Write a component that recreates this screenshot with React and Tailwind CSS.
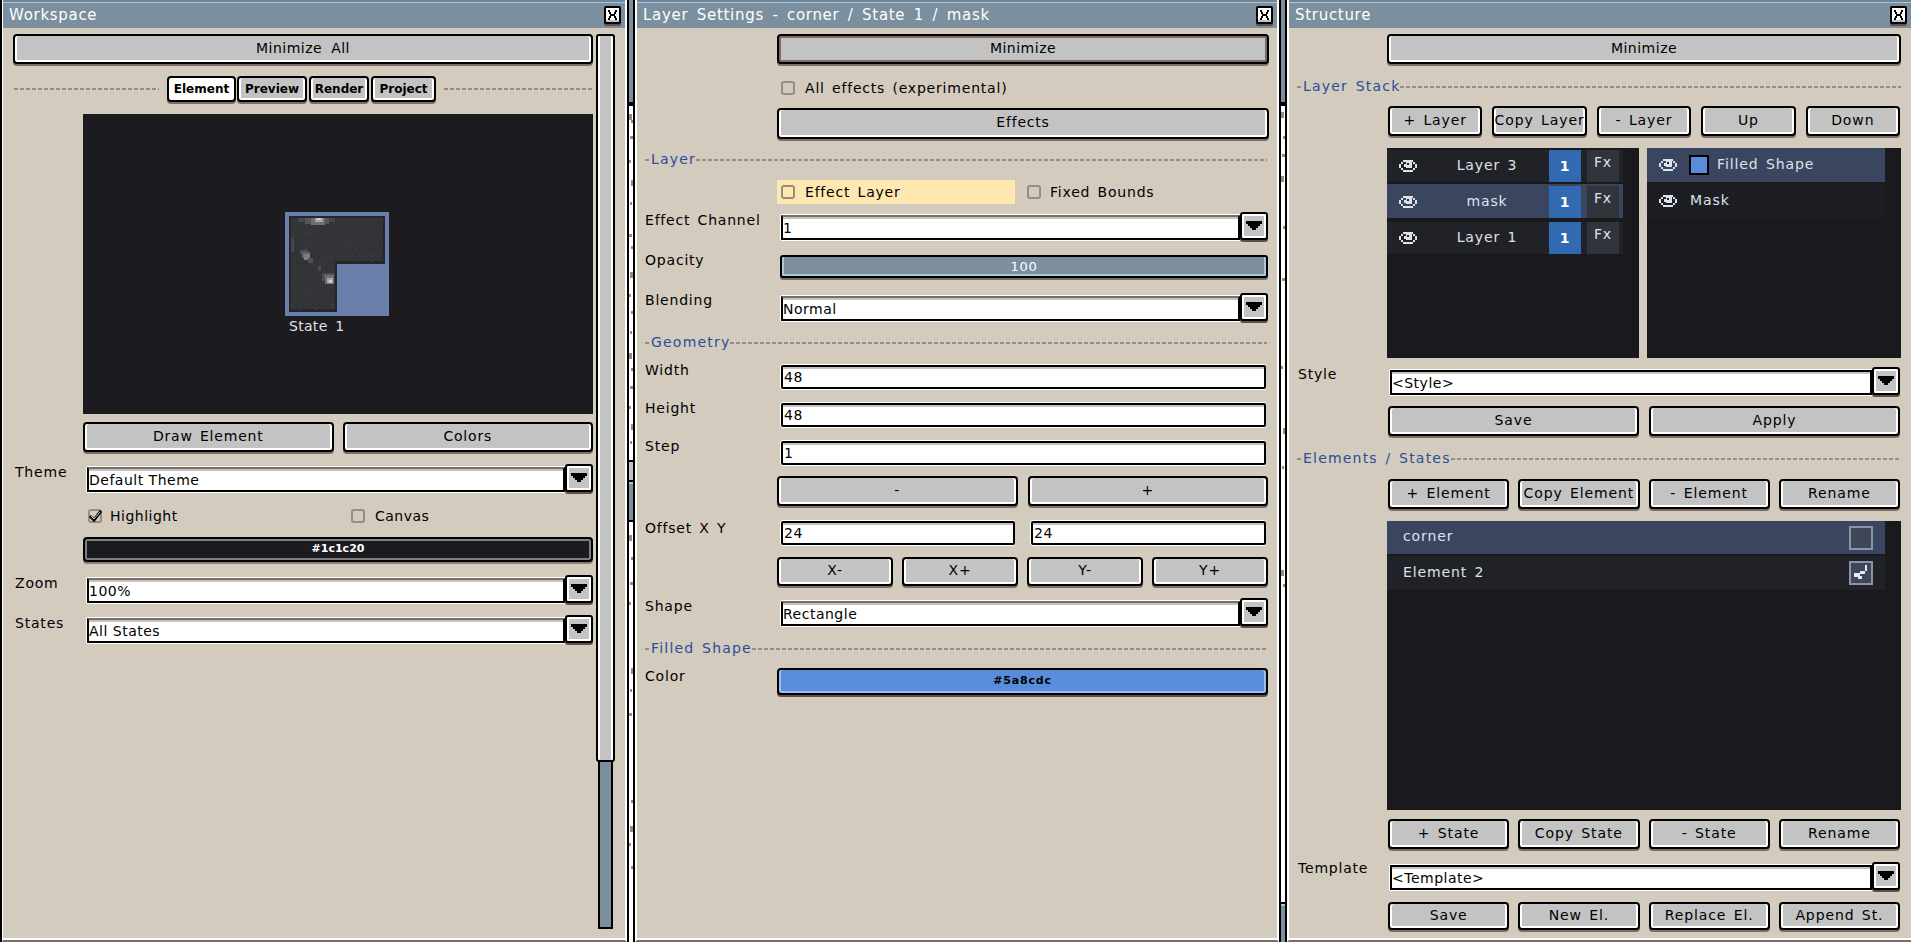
function Btn({ children, className = "", pressed = false }) {
  return (
    <div
      className={`flex items-center justify-center overflow-hidden whitespace-nowrap rounded-[4px] border-2 border-black bg-[#c3c3c3] pb-[2px] text-black ${
        pressed
          ? "shadow-[inset_0_0_0_2px_#7d6b65,0_2px_0_#7d6b65]"
          : "shadow-[inset_2px_0_0_#fff,inset_-2px_0_0_#fff,inset_0_-2px_0_#fff,0_2px_0_#7d6b65]"
      } ${className}`}
    >
      {children}
    </div>
  );
}

function Arrow() {
  return (
    <div className="relative z-10 flex h-[28px] w-[28px] shrink-0 items-center justify-center rounded-[3px] border-2 border-black bg-[#c3c3c3] shadow-[inset_2px_0_0_#fff,inset_-2px_0_0_#fff,inset_0_2px_0_#fff,inset_0_-2px_0_#fff,0_2px_0_#5d4f4a]">
      <svg width="18" height="10" viewBox="0 0 18 10" shapeRendering="crispEdges">
        <path d="M1 0h16v3h-2v2h-2v2h-2v2h-4v-2h-2v-2h-2v-2h-2z" fill="#000" />
      </svg>
    </div>
  );
}

function Select({ value, className = "", black = false }) {
  return (
    <div className={`flex items-start ${className}`}>
      <div
        className={`mt-[3px] flex h-[25px] flex-1 items-end overflow-hidden border-2 border-x-black border-b-black bg-white pb-[1px] text-[14px] leading-[18px] tracking-[0.5px] text-black shadow-[inset_0_2px_0_#c3c3c3,0_1px_0_#fff,-1px_0_0_#fff,0_-1px_0_#fff] ${
          black ? "border-t-black" : "border-t-[#7d6b65]"
        }`}
      >
        {value}
      </div>
      <Arrow />
    </div>
  );
}

function Input({ value, className = "" }) {
  return (
    <div className={`flex h-[24px] items-center rounded-[2px] border-2 border-black bg-white pl-[1px] text-[14px] leading-[18px] tracking-[0.5px] text-black shadow-[inset_0_2px_0_#c3c3c3,0_1px_0_#fff,-1px_0_0_#fff,0_-1px_0_#fff] ${className}`}>
      {value}
    </div>
  );
}

function Label({ children, className = "" }) {
  return <div className={`h-4 shrink-0 whitespace-nowrap text-[14px] leading-4 tracking-[0.8px] text-black ${className}`}>{children}</div>;
}

function Dashes({ className = "" }) {
  return <div className={`h-[2px] bg-[repeating-linear-gradient(90deg,#9a8a84_0_4px,transparent_4px_6px)] ${className}`} />;
}

function Section({ title, className = "" }) {
  return (
    <div className={`flex h-4 items-center ${className}`}>
      <Dashes className="w-[6px]" />
      <span className="-mt-[2px] whitespace-nowrap text-[14px] leading-4 tracking-[1.2px] text-[#2a4e98]">{title}</span>
      <Dashes className="flex-1" />
    </div>
  );
}

function Check({ checked = false }) {
  return (
    <div className="relative h-[14px] w-[14px] shrink-0 rounded-[3px] border-2 border-[#9a8a84]">
      {checked && (
        <svg className="absolute -left-[2px] -top-[2px]" width="15" height="14" viewBox="0 0 15 14">
          <path d="M2 7 L6 11 L13 2" fill="none" stroke="#000" strokeWidth="3" />
          <path d="M3 7 L6 10 L12 3" fill="none" stroke="#fff" strokeWidth="0.8" />
        </svg>
      )}
    </div>
  );
}

function Eye() {
  return (
    <svg className="shrink-0" width="18" height="12" viewBox="0 0 18 12" shapeRendering="crispEdges">
      <path
        fill="#dfe1ea"
        d="M4 0h10v2h2v2h2v4h-2v2h-2v2h-10v-2h-2v-2h-2v-4h2v-2h2zM4 2v2h-2v4h2v2h10v-2h2v-4h-2v-2z"
      />
      <path fill="#dfe1ea" d="M7 2h6v6h-6zM5 4h2v3h-2z" />
      <path fill="#202228" d="M8 3h2v2h-2z" />
    </svg>
  );
}

function Close() {
  return (
    <div className="flex h-[18px] w-[17px] items-center justify-center rounded-[2px] border-2 border-black bg-white shadow-[inset_0_-2px_0_#c3c3c3,0_2px_0_#5d4f4a]">
      <svg width="9" height="10" viewBox="0 0 9 10" shapeRendering="crispEdges">
        <path d="M0 0h2v2h1v2h3v-2h1v-2h2v2h-1v2h-1v2h1v2h1v2h-2v-2h-1v-2h-3v2h-1v2h-2v-2h1v-2h1v-2h-1v-2h-1z" fill="#000" />
      </svg>
    </div>
  );
}

function Panel({ title, children, className = "", leftClass = "border-l-2" }) {
  return (
    <div className={`flex h-[942px] shrink-0 flex-col border-black ${className}`}>
      <div className={`flex h-full flex-col border-b-2 border-white border-b-[#7d6b65] ${leftClass}`}>
        <div className="flex h-[28px] shrink-0 items-center justify-between border-t-2 border-t-[#6f8494] bg-[#7b8f9e] pl-[6px] pr-[4px] shadow-[inset_0_1px_0_#a9c7de]">
          <span className="whitespace-nowrap text-[15px] tracking-[0.7px] text-white [word-spacing:3px]">{title}</span>
          <Close />
        </div>
        <div className="min-h-0 flex-1 border-b-2 border-b-white bg-[#d3cbbe]">{children}</div>
      </div>
    </div>
  );
}

function Strip({ segments }) {
  return (
    <div className="flex h-[942px] w-[4px] shrink-0 flex-col bg-white">
      {segments.map((s, i) => (
        <div key={i} className="shrink-0" style={{ height: s.h, background: s.c }}>
          {s.f && (
            <svg width="4" height={s.h} shapeRendering="crispEdges">
              {s.f.map((y, j) => (
                <rect key={j} x={j % 3 === 0 ? 0 : j % 3 === 1 ? 2 : 1} y={y} width={j % 2 ? 2 : 3} height={j % 4 === 0 ? 6 : 3} fill="#9a8a84" />
              ))}
            </svg>
          )}
        </div>
      ))}
    </div>
  );
}

function inL(x, y) {
  return x >= 2 && y >= 2 && ((y < 45 && x < 94) || (x < 46 && y < 93));
}

function Thumb() {
  const noise = [];
  let seed = 7;
  for (let y = 2; y < 93; y += 2) {
    for (let x = 2; x < 94; x += 2) {
      seed = (seed * 1103 + 12345) % 65536;
      if (inL(x, y) && seed % 9 === 0) {
        const tones = ["#36373b", "#38393d", "#303135", "#3a3b3f"];
        noise.push([x, y, 2, 2, tones[(seed >> 4) % 4]]);
      }
    }
  }
  const light = [
    [9, 2, 37, 4, "#45464c"], [16, 2, 24, 6, "#55565c"], [22, 2, 14, 7, "#6f7076"], [26, 2, 8, 4, "#a5a6aa"], [28, 2, 4, 2, "#d0d1d4"],
    [2, 22, 3, 14, "#45464c"], [11, 34, 8, 4, "#4d4e54"], [13, 36, 8, 6, "#62636a"], [15, 38, 6, 6, "#7c7d83"], [19, 42, 5, 5, "#4d4e54"],
    [29, 50, 3, 5, "#47484e"], [33, 57, 12, 8, "#4d4e54"], [36, 59, 9, 9, "#6f7076"], [38, 62, 6, 5, "#a5a6aa"], [40, 64, 3, 3, "#d0d1d4"],
  ];
  return (
    <div className="h-[104px] w-[104px] bg-[#6b7fab] p-[4px]">
      <svg width="96" height="96" viewBox="0 0 96 96" shapeRendering="crispEdges">
        <path d="M0 0H96V48H48V96H0Z" fill="#26262a" />
        <path d="M2 2H94V45H46V93H2Z" fill="#333438" />
        {noise.concat(light).map(([x, y, w, h, c], i) => (
          <rect key={i} x={x} y={y} width={w} height={h} fill={c} />
        ))}
      </svg>
    </div>
  );
}

function LayerRow({ name, active, className = "" }) {
  return (
    <div className={`flex w-[236px] items-end ${active ? "h-[34px] bg-[#3a4660]" : "h-[32px] bg-[#202228]"} ${className}`}>
      <div className="flex h-[32px] w-full items-center">
        <div className="ml-[12px]"><Eye /></div>
        <span className="flex-1 pb-[2px] pl-[8px] text-center text-[14px] text-[#dfe1ea]">{name}</span>
        <span className="flex h-[32px] w-[32px] items-center justify-center bg-[#326ab2] text-[14px] font-bold text-white">1</span>
        <span className="ml-[6px] mr-[4px] flex h-[32px] w-[32px] justify-center bg-[#32343c] pt-[2px] text-[14px] leading-5 text-[#dfe1ea]">Fx</span>
      </div>
    </div>
  );
}

function Workspace() {
  return (
    <div className="flex pl-[11px]">
      <div className="w-[579px]">
        <Btn className="-ml-[1px] mt-[6px] h-[30px] w-[580px] text-[14px] tracking-[0.5px] [word-spacing:4px]">Minimize All</Btn>
        <div className="mt-[12px] flex h-[26px] items-center gap-[8px]">
          <Dashes className="w-[145px]" />
          <div className="flex gap-[1px] text-[12px] font-bold">
            <Btn className="h-[26px] w-[69px] bg-white pb-0!">Element</Btn>
            <Btn className="h-[26px] w-[70px] pb-0!">Preview</Btn>
            <Btn className="ml-[1px] h-[26px] w-[60px] pb-0!">Render</Btn>
            <Btn className="ml-[1px] h-[26px] w-[65px] pb-0!">Project</Btn>
          </div>
          <Dashes className="flex-1" />
        </div>
        <div className="ml-[69px] mt-[12px] h-[300px] w-[510px] bg-[#1c1c20] pl-[202px] pt-[98px]">
          <Thumb />
          <div className="mt-[2px] pl-[4px] text-[14px] leading-4 tracking-[0.3px] text-[#e0e0e8] [word-spacing:3px]">State 1</div>
        </div>
        <div className="ml-[69px] mt-[8px] flex gap-[9px] text-[14px] tracking-[0.8px] [word-spacing:2px]">
          <Btn className="h-[30px] flex-1">Draw Element</Btn>
          <Btn className="h-[30px] flex-1">Colors</Btn>
        </div>
        <div className="mt-[12px] flex">
          <Label className="w-[73px] pl-[1px]">Theme</Label>
          <Select value="Default Theme" className="flex-1" />
        </div>
        <div className="ml-[74px] mt-[16px] flex h-4 items-center text-[14px] tracking-[0.5px] text-black">
          <Check checked />
          <span className="ml-[8px] w-[241px]">Highlight</span>
          <Check />
          <span className="ml-[10px]">Canvas</span>
        </div>
        <div className="ml-[69px] mt-[13px] flex h-[25px] items-center justify-center rounded-[4px] border-2 border-black bg-[#1c1c20] text-[11px] font-bold text-white shadow-[inset_0_0_0_2px_#7f7f7f,0_2px_0_#8a7f78]">
          #1c1c20
        </div>
        <div className="mt-[13px] flex">
          <Label className="w-[73px] pl-[1px]">Zoom</Label>
          <Select value="100%" className="flex-1" />
        </div>
        <div className="mt-[12px] flex">
          <Label className="w-[73px] pl-[1px]">States</Label>
          <Select value="All States" className="flex-1" />
        </div>
      </div>
      <div className="ml-[3px] mt-[6px] w-[19px]">
        <div className="h-[728px] rounded-[3px] border-2 border-black bg-[#c3c3c3] shadow-[inset_2px_0_0_#fff,inset_-2px_0_0_#fff]" />
        <div className="mx-[2px] h-[167px] border-2 border-t-0 border-black bg-[#7b8f9e]" />
      </div>
    </div>
  );
}

function LayerSettings() {
  return (
    <div className="pl-[8px] text-[14px] tracking-[0.8px] [word-spacing:2px]">
      <Btn pressed className="ml-[132px] mt-[6px] h-[30px] w-[492px] tracking-[0.5px]">Minimize</Btn>
      <div className="ml-[136px] mt-[16px] flex h-4 items-center">
        <Check />
        <span className="ml-[10px] text-black">All effects (experimental)</span>
      </div>
      <Btn className="ml-[132px] mt-[12px] h-[31px] w-[492px]">Effects</Btn>
      <Section title="Layer" className="mt-[13px] w-[622px]" />
      <div className="ml-[132px] mt-[12px] flex h-[24px] items-center text-black">
        <div className="flex h-[24px] w-[238px] items-center bg-[#ffe8b0] pl-[4px]">
          <Check />
          <span className="ml-[10px]">Effect Layer</span>
        </div>
        <div className="ml-[12px]"><Check /></div>
        <span className="ml-[9px]">Fixed Bounds</span>
      </div>
      <div className="mt-[8px] flex">
        <Label className="w-[136px]">Effect Channel</Label>
        <Select value="1" className="w-[487px]" />
      </div>
      <div className="mt-[15px] flex">
        <Label className="mt-[-3px] w-[135px]">Opacity</Label>
        <div className="flex h-[23px] w-[488px] items-center justify-center rounded-[3px] border-2 border-black bg-[#7b8f9e] text-[13px] text-white shadow-[inset_2px_0_0_#a9c7de,inset_-2px_0_0_#a9c7de,inset_0_-2px_0_#a9c7de,0_2px_0_#7d6b65]">100</div>
      </div>
      <div className="mt-[15px] flex">
        <Label className="mt-[-1px] w-[136px]">Blending</Label>
        <Select value="Normal" className="w-[487px]" />
      </div>
      <Section title="Geometry" className="mt-[14px] w-[622px]" />
      <div className="mt-[14px] flex">
        <Label className="mt-[-3px] w-[136px]">Width</Label>
        <Input value="48" className="w-[485px]" />
      </div>
      <div className="mt-[14px] flex">
        <Label className="mt-[-3px] w-[136px]">Height</Label>
        <Input value="48" className="w-[485px]" />
      </div>
      <div className="mt-[14px] flex">
        <Label className="mt-[-3px] w-[136px]">Step</Label>
        <Input value="1" className="w-[485px]" />
      </div>
      <div className="ml-[132px] mt-[11px] flex w-[491px] gap-[10px]">
        <Btn className="h-[30px] flex-1">-</Btn>
        <Btn className="h-[30px] flex-1">+</Btn>
      </div>
      <div className="mt-[15px] flex">
        <Label className="mt-[-1px] w-[136px]">Offset X Y</Label>
        <Input value="24" className="w-[234px]" />
        <Input value="24" className="ml-[16px] w-[235px]" />
      </div>
      <div className="ml-[132px] mt-[12px] flex w-[491px] gap-[9px]">
        <Btn className="h-[29px] flex-1">X-</Btn>
        <Btn className="h-[29px] flex-1">X+</Btn>
        <Btn className="h-[29px] flex-1">Y-</Btn>
        <Btn className="h-[29px] flex-1">Y+</Btn>
      </div>
      <div className="mt-[12px] flex">
        <Label className="w-[136px]">Shape</Label>
        <Select value="Rectangle" className="w-[487px]" />
      </div>
      <Section title="Filled Shape" className="mt-[15px] w-[622px]" />
      <div className="mt-[11px] flex">
        <Label className="w-[132px]">Color</Label>
        <div className="flex h-[27px] w-[491px] items-center justify-center rounded-[4px] border-2 border-black bg-[#5a8cdc] text-[11px] font-bold text-black shadow-[inset_2px_0_0_#9dbdee,inset_-2px_0_0_#9dbdee,inset_0_-2px_0_#9dbdee,0_2px_0_#5d4f4a]">
          #5a8cdc
        </div>
      </div>
    </div>
  );
}

function Structure() {
  return (
    <div className="pl-[8px] text-[14px] tracking-[0.9px] [word-spacing:2px]">
      <Btn className="ml-[90px] mt-[6px] h-[30px] w-[514px] tracking-[0.5px]">Minimize</Btn>
      <Section title="Layer Stack" className="mt-[15px] w-[604px]" />
      <div className="ml-[91px] mt-[11px] flex w-[512px] gap-[10px]">
        {["+ Layer", "Copy Layer", "- Layer", "Up", "Down"].map((t) => (
          <Btn key={t} className="h-[30px] flex-1">{t}</Btn>
        ))}
      </div>
      <div className="ml-[90px] mt-[12px] flex h-[210px] gap-[8px]">
        <div className="w-[252px] bg-[#19191e] pt-[2px]">
          <LayerRow name="Layer 3" />
          <LayerRow name="mask" active className="mt-[2px]" />
          <LayerRow name="Layer 1" className="mt-[4px]" />
        </div>
        <div className="w-[254px] bg-[#19191e] text-[#dfe1ea]">
          <div className="flex h-[34px] w-[238px] items-center bg-[#3a4660] pl-[12px]">
            <Eye />
            <span className="ml-[12px] h-[20px] w-[20px] border-2 border-black bg-[#5a8cdc]" />
            <span className="ml-[8px] pb-[2px]">Filled Shape</span>
          </div>
          <div className="mt-[2px] flex h-[34px] w-[238px] items-center bg-[#1c1e24] pl-[12px]">
            <Eye />
            <span className="ml-[13px] pb-[2px]">Mask</span>
          </div>
        </div>
      </div>
      <div className="mt-[9px] flex">
        <Label className="mt-[-1px] w-[93px] pl-[1px]">Style</Label>
        <Select black value="<Style>" className="w-[510px]" />
      </div>
      <div className="ml-[91px] mt-[11px] flex w-[512px] gap-[10px]">
        <Btn className="h-[30px] flex-1">Save</Btn>
        <Btn className="h-[30px] flex-1">Apply</Btn>
      </div>
      <Section title="Elements / States" className="mt-[15px] w-[604px]" />
      <div className="ml-[91px] mt-[12px] flex w-[512px] gap-[9px]">
        {["+ Element", "Copy Element", "- Element", "Rename"].map((t) => (
          <Btn key={t} className="h-[30px] flex-1">{t}</Btn>
        ))}
      </div>
      <div className="ml-[90px] mt-[12px] h-[289px] w-[514px] bg-[#19191e] text-[#dfe1ea]">
        <div className="flex h-[33px] w-[498px] items-center justify-between bg-[#3a4660] pl-[16px] pr-[12px]">
          <span className="pb-[2px]">corner</span>
          <span className="h-[24px] w-[24px] border-2 border-[#8a94a8] bg-[#3e4658]" />
        </div>
        <div className="mt-[2px] flex h-[34px] w-[498px] items-center justify-between bg-[#202228] pl-[16px] pr-[12px]">
          <span className="pb-[2px]">Element 2</span>
          <span className="flex h-[24px] w-[24px] items-center justify-center border-2 border-[#8a94a8] bg-[#3e4658]">
            <svg width="16" height="16" viewBox="0 0 16 16" shapeRendering="crispEdges">
              <path d="M12 0h2v6h-2zM7 6h5v3h-5zM1 8h6v3h2v3h-4v-2h-4z" fill="#e8e8ee" />
            </svg>
          </span>
        </div>
      </div>
      <div className="ml-[91px] mt-[9px] flex w-[512px] gap-[9px]">
        {["+ State", "Copy State", "- State", "Rename"].map((t) => (
          <Btn key={t} className="h-[30px] flex-1">{t}</Btn>
        ))}
      </div>
      <div className="mt-[13px] flex">
        <Label className="mt-[-2px] w-[93px] pl-[1px]">Template</Label>
        <Select black value="<Template>" className="w-[510px]" />
      </div>
      <div className="ml-[91px] mt-[12px] flex w-[512px] gap-[9px]">
        {["Save", "New El.", "Replace El.", "Append St."].map((t) => (
          <Btn key={t} className="h-[28px] flex-1">{t}</Btn>
        ))}
      </div>
    </div>
  );
}

export default function App() {
  return (
    <div className="flex h-[942px] w-[1911px] overflow-hidden bg-white font-['DejaVu_Sans',sans-serif]">
      <Panel title="Workspace" className="w-[629px] border-x-2" leftClass="border-l-[1px] border-r-2">
        <Workspace />
      </Panel>
      <Strip
        segments={[
          { h: 102, c: "#7b8f9e" },
          { h: 4, c: "#000" },
          { h: 354, c: "#fff", f: [8, 14, 30, 54, 74, 96, 128, 140, 166, 188, 205, 225, 247, 262, 280, 300, 318, 335] },
          { h: 2, c: "#000" },
          { h: 18, c: "#c3c3c3" },
          { h: 2, c: "#000" },
          { h: 2, c: "#a9c7de" },
          { h: 36, c: "#7b8f9e" },
          { h: 2, c: "#000" },
          { h: 420, c: "#fff", f: [13, 35, 60, 80, 146, 167, 191, 278, 304, 321, 344] },
        ]}
      />
      <Panel title="Layer Settings - corner / State 1 / mask" className="w-[648px] border-x-2" leftClass="border-l-2 border-r-2">
        <LayerSettings />
      </Panel>
      <Strip
        segments={[
          { h: 102, c: "#7b8f9e" },
          { h: 4, c: "#000" },
          { h: 60, c: "#fff", f: [6, 30, 48] },
          { h: 320, c: "#fff", f: [10, 60, 112, 200, 262, 300] },
          { h: 416, c: "#fff", f: [84, 98] },
          { h: 2, c: "#000" },
          { h: 2, c: "#a9c7de" },
          { h: 36, c: "#7b8f9e" },
        ]}
      />
      <Panel title="Structure" className="w-[626px] border-l-2" leftClass="border-l-2">
        <Structure />
      </Panel>
    </div>
  );
}
